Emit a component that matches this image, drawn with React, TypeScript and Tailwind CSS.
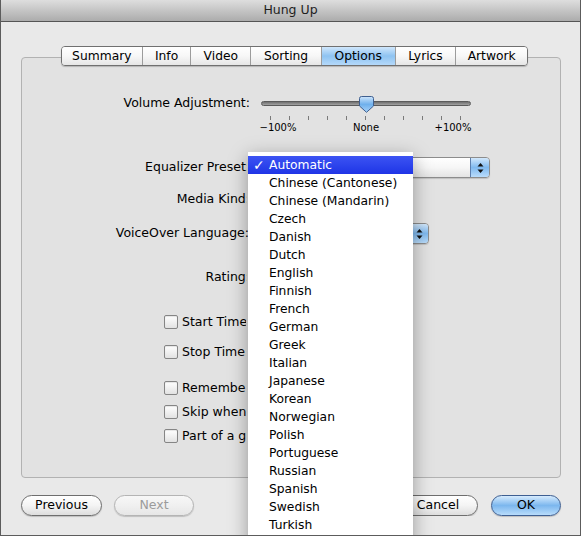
import React from 'react'

const tabs = [
  { label: 'Summary', w: 'w-[80px]' },
  { label: 'Info', w: 'w-[49px]' },
  { label: 'Video', w: 'w-[60px]' },
  { label: 'Sorting', w: 'w-[71px]' },
  { label: 'Options', w: 'w-[74px]', active: true },
  { label: 'Lyrics', w: 'w-[61px]' },
  { label: 'Artwork', w: 'w-[72px]' },
]

const languages = [
  'Automatic',
  'Chinese (Cantonese)',
  'Chinese (Mandarin)',
  'Czech',
  'Danish',
  'Dutch',
  'English',
  'Finnish',
  'French',
  'German',
  'Greek',
  'Italian',
  'Japanese',
  'Korean',
  'Norwegian',
  'Polish',
  'Portuguese',
  'Russian',
  'Spanish',
  'Swedish',
  'Turkish',
]

function Arrows() {
  return (
    <svg width="7" height="12" viewBox="0 0 7 12">
      <path d="M3.5 1 L6.5 4.5 L0.5 4.5 Z" fill="#111" />
      <path d="M3.5 11 L6.5 7.5 L0.5 7.5 Z" fill="#111" />
    </svg>
  )
}

function Popup({ width, className = 'ml-[9px]' }: { width: string; className?: string }) {
  return (
    <div
      className={`${className} ${width} h-[21px] flex rounded-[4px] border border-[#8c8c8c] overflow-hidden shadow-[0_1px_1px_rgba(0,0,0,0.15)]`}
    >
      <div className="flex-1 bg-gradient-to-b from-white via-[#f6f6f6] to-[#e4e4e4]" />
      <div className="w-[19px] flex items-center justify-center border-l border-[#5d7fae] bg-gradient-to-b from-[#d2e8fc] via-[#7fb9ef] to-[#b9dcfb]">
        <Arrows />
      </div>
    </div>
  )
}

// label whose right end slips under the open menu
function HiddenLabel({ text }: { text: string }) {
  return (
    <div className="w-[225px] overflow-hidden flex justify-end text-[12.5px]">
      <span className="shrink-0 whitespace-nowrap -mr-[3px]">{text}</span>
    </div>
  )
}

function Checkbox({ label, className }: { label: string; className: string }) {
  return (
    <div className={`${className} h-[20px] flex items-center pl-[142px]`}>
      <div className="shrink-0 w-[14px] h-[14px] rounded-[2px] border border-[#858585] bg-gradient-to-b from-white to-[#e2e2e2] shadow-[inset_0_1px_1px_rgba(0,0,0,0.1)]" />
      <span className="ml-[4px] w-[64px] overflow-hidden text-[12.5px] whitespace-nowrap">{label}</span>
    </div>
  )
}

function Button({
  label,
  width,
  disabled,
  primary,
  className = '',
}: {
  label: string
  width: string
  disabled?: boolean
  primary?: boolean
  className?: string
}) {
  let look = 'border-[#6e6e6e] from-white via-[#f4f4f4] to-[#dedede] text-black'
  if (disabled) look = 'border-[#b4b4b4] from-[#f7f7f7] via-[#f0f0f0] to-[#e6e6e6] text-[#9b9b9b]'
  if (primary) look = 'border-[#3e5f92] from-[#d6ebfd] via-[#7cb7ee] to-[#b8dcfb] text-black'
  return (
    <div
      className={`${className} ${width} h-[21px] rounded-full border bg-gradient-to-b ${look} flex items-center justify-center text-[12.5px] shadow-[0_1px_1px_rgba(0,0,0,0.18)]`}
    >
      {label}
    </div>
  )
}

function Knob() {
  return (
    <svg width="15" height="17" viewBox="0 0 15 17">
      <defs>
        <linearGradient id="kg" x1="0" y1="0" x2="0" y2="1">
          <stop offset="0" stopColor="#cfe6fc" />
          <stop offset="0.5" stopColor="#6fb0ec" />
          <stop offset="1" stopColor="#a9d3fa" />
        </linearGradient>
      </defs>
      <path
        d="M2.5 0.5 H12.5 Q14.5 0.5 14.5 2.5 V10 L7.5 16.3 L0.5 10 V2.5 Q0.5 0.5 2.5 0.5 Z"
        fill="url(#kg)"
        stroke="#3f5f8f"
      />
    </svg>
  )
}

export default function App() {
  return (
    <div className="relative w-[581px] h-[536px] overflow-hidden bg-[#e9e9e9] border-x border-b border-[#5c5c5c] text-black font-['DejaVu_Sans',sans-serif]">
      <div className="h-[22px] flex items-center justify-center bg-gradient-to-b from-[#dedede] to-[#acacac] border-b border-[#555] text-[12.5px] text-[#1e1e1e]">
        Hung Up
      </div>

      <div className="pl-[20px] pr-[19px] pt-[24px]">
        <div className="relative z-10 ml-[40px] flex h-[20px] w-[467px] rounded-[4px] border border-[#707070] overflow-hidden shadow-[0_1px_1px_rgba(0,0,0,0.2)]">
          {tabs.map((t, i) => (
            <div
              key={t.label}
              className={`${t.w} flex items-center justify-center text-[12.3px] bg-gradient-to-b ${
                i > 0 ? 'border-l border-[#9c9c9c]' : ''
              } ${
                t.active
                  ? 'from-[#d0e7fc] via-[#8ec3f1] to-[#b4d9fa]'
                  : 'from-white via-[#f7f7f7] to-[#e6e6e6]'
              }`}
            >
              {t.label}
            </div>
          ))}
        </div>

        <div className="-mt-[9px] w-[540px] h-[421px] rounded-[4px] border border-[#b2b2b2] bg-[#e2e2e2]">
          <div className="mt-[35px] flex h-[20px] items-center">
            <div className="w-[228px] text-right text-[12.5px]">Volume Adjustment:</div>
            <div className="relative ml-[11px] w-[210px] h-[20px]">
              <div className="absolute left-0 right-0 top-[8px] h-[5px] rounded-full border border-[#5b5b5b] bg-gradient-to-b from-[#707070] to-[#a3a3a3]" />
              <div className="absolute left-[98px] top-[3px]">
                <Knob />
              </div>
            </div>
          </div>
          <div className="mt-[3px] ml-[248px] flex gap-[18px] h-[4px]">
            {Array.from({ length: 11 }).map((_, i) => (
              <div key={i} className="w-px h-[4px] bg-[#7a7a7a]" />
            ))}
          </div>
          <div className="mt-[2px] ml-[226px] flex text-[10px] leading-[12px]">
            <div className="w-[60px] text-center">−100%</div>
            <div className="ml-[28px] w-[60px] text-center">None</div>
            <div className="ml-[27px] w-[60px] text-center">+100%</div>
          </div>

          <div className="mt-[23px] flex h-[21px] items-center">
            <HiddenLabel text="Equalizer Preset:" />
            <Popup width="w-[234px]" />
          </div>
          <div className="mt-[11px] flex h-[20px] items-center">
            <HiddenLabel text="Media Kind:" />
          </div>
          <div className="mt-[14px] flex h-[21px] items-center">
            <div className="w-[227px] text-right text-[12.5px] whitespace-nowrap">VoiceOver Language:</div>
            <Popup width="w-[173px]" className="ml-[7px]" />
          </div>
          <div className="mt-[23px] flex h-[20px] items-center">
            <HiddenLabel text="Rating:" />
          </div>

          <Checkbox className="mt-[25px]" label="Start Time:" />
          <Checkbox className="mt-[10px]" label="Stop Time:" />
          <Checkbox className="mt-[16px]" label="Remember playback position" />
          <Checkbox className="mt-[4px]" label="Skip when shuffling" />
          <Checkbox className="mt-[4px]" label="Part of a gapless album" />
        </div>

        <div className="mt-[17px] flex">
          <Button label="Previous" width="w-[81px]" />
          <Button label="Next" width="w-[80px]" disabled className="ml-[12px]" />
          <div className="ml-auto w-[66px] h-[21px] overflow-hidden flex justify-end">
            <Button label="Cancel" width="w-[80px]" className="shrink-0" />
          </div>
          <Button label="OK" width="w-[70px]" primary className="ml-[13px]" />
        </div>
      </div>

      <div className="absolute z-20 left-[247px] top-[152px] w-[165px] h-[400px] pt-[4px] bg-white shadow-[0_5px_18px_rgba(0,0,0,0.35)] text-[12.3px]">
        {languages.map((lang, i) => (
          <div
            key={lang}
            className={`h-[18px] flex items-center whitespace-nowrap ${
              i === 0 ? 'bg-gradient-to-b from-[#3c53f3] to-[#1f34e6] text-white' : 'text-black'
            }`}
          >
            <span className="w-[21px] pl-[5px] text-[14px] font-bold leading-none">{i === 0 ? '✓' : ''}</span>
            <span>{lang}</span>
          </div>
        ))}
      </div>
    </div>
  )
}
